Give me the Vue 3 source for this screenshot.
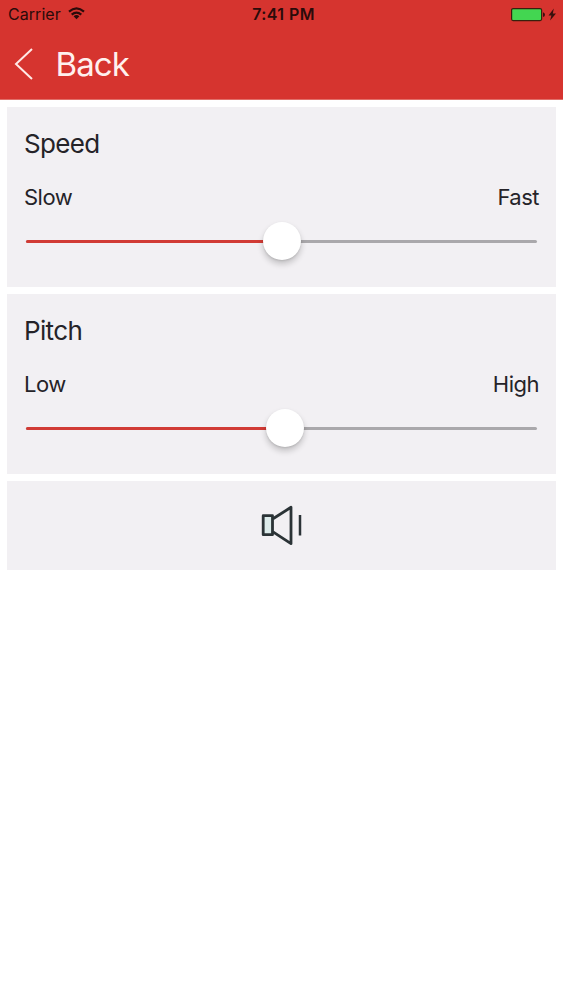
<script setup>
const sliders = [
  { title: 'Speed', min: 'Slow', max: 'Fast', value: 50.1 },
  { title: 'Pitch', min: 'Low', max: 'High', value: 50.6 },
]
</script>

<template>
  <div class="screen">
    <header class="header">
      <div class="status">
        <div class="side">
          <span class="carrier">Carrier</span>
          <svg class="wifi" width="17" height="13" viewBox="0 0 17 13" fill="none" stroke="#2a0b0a" stroke-width="2.200">
            <path d="M1 4.600Q8.500 -1.800 16 4.600M3.700 7.600Q8.500 3.500 13.300 7.600" />
            <path d="M8.500 12.200L5.600 9.200Q8.500 7 11.400 9.200Z" fill="#2a0b0a" stroke="none" />
          </svg>
        </div>
        <span class="time">7:41 PM</span>
        <div class="side right">
          <svg width="46" height="16" viewBox="0 0 46 16">
            <rect x="0.600" y="1.600" width="30" height="12" rx="1.500" fill="#43d651" stroke="#38200d" stroke-width="1.200" />
            <path d="M32 5.300Q34 6 34 7.700Q34 9.400 32 10.100Z" fill="#38100d" />
            <path d="M42.800 1.500L37.500 8.600H40.400L39.100 13.600L45 6.500H41.800Z" fill="#38100d" />
          </svg>
        </div>
      </div>
      <div class="nav">
        <svg width="20" height="34" viewBox="0 0 20 34" fill="none" stroke="#ffe9e6" stroke-width="2">
          <path d="M18 2L2 17L18 32" />
        </svg>
        <span class="back">Back</span>
      </div>
    </header>
    <main class="content">
      <section v-for="s in sliders" :key="s.title" class="card">
        <h2>{{ s.title }}</h2>
        <div class="labels"><span>{{ s.min }}</span><span>{{ s.max }}</span></div>
        <div class="track">
          <div class="fill" :style="{ width: s.value + '%' }"></div>
          <div class="thumb" :style="{ left: s.value + '%' }"></div>
        </div>
      </section>
      <section class="card play">
        <svg width="42" height="42" viewBox="0 0 42 42" fill="none" stroke="#2b3336" stroke-width="2.800" stroke-linejoin="round">
          <rect x="2.200" y="10.700" width="9.300" height="19" fill="#dcebea" />
          <path d="M12 13.700L30 2.300V38.700L12 26.800" />
          <path d="M39 10V30.500" stroke-width="2.500" />
        </svg>
      </section>
    </main>
  </div>
</template>

<style>
body { background: #fff; }
</style>

<style scoped>
.screen { min-height: 1000px; background: #fff; font-family: Inter, "Liberation Sans", sans-serif; color: #252328; }
.header { box-sizing: border-box; height: 100px; background: #d6342f; border-bottom: 1px solid #e06f69; }
.status { display: flex; align-items: center; height: 29px; padding: 0 6px 0 8px; color: #2a0b0a; font-size: 16px; line-height: 29px; }
.side { flex: 1; display: flex; align-items: center; }
.right { justify-content: flex-end; }
.carrier { letter-spacing: 0.050px; }
.wifi { margin-left: 7px; margin-top: -2px; }
.time { margin-left: 2px; font-weight: 600; letter-spacing: 0.400px; }
.nav { display: flex; align-items: center; height: 70px; padding-left: 14px; }
.back { margin-left: 21.500px; font-size: 33px; letter-spacing: -0.900px; color: #fff0ee; }
.content { display: flex; flex-direction: column; gap: 7px; padding: 7px 7px 0; }
.card { box-sizing: border-box; height: 180px; padding: 20px 17px 0; background: #f2f0f3; }
h2 { margin: 0; font-size: 26px; font-weight: 400; line-height: 34px; letter-spacing: -0.650px; }
.labels { display: flex; justify-content: space-between; margin-top: 20px; font-size: 22px; line-height: 32px; letter-spacing: -0.500px; }
.track { position: relative; height: 3px; margin: 27px 2px 0; background: #aaa8ab; border-radius: 2px; }
.fill { height: 3px; background: #d13b35; border-radius: 2px; }
.thumb { position: absolute; top: -18.500px; width: 38px; height: 38px; margin-left: -19px; border-radius: 50%; background: #fff; box-shadow: 0 4px 6px rgba(0, 0, 0, 0.200), 0 1px 2px rgba(0, 0, 0, 0.100); }
.play { display: flex; align-items: center; justify-content: center; height: 89px; padding: 0; }
</style>
